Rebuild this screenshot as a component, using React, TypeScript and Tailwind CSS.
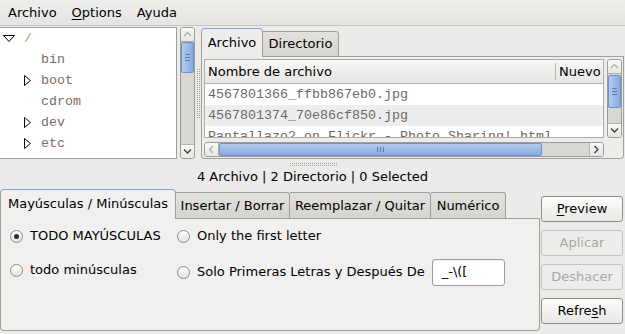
import React from "react";

type Dir = "up" | "down" | "left" | "right";

function Chevron({ dir, color }: { dir: Dir; color: string }) {
  const vertical = dir === "up" || dir === "down";
  const pts = {
    up: "1,5 4.5,1.5 8,5",
    down: "1,1.5 4.5,5 8,1.5",
    left: "5,1 1.5,4.5 5,8",
    right: "1.5,1 5,4.5 1.5,8",
  }[dir];
  return (
    <svg width={vertical ? 9 : 7} height={vertical ? 7 : 9} viewBox={vertical ? "0 0 9 7" : "0 0 7 9"}>
      <polyline points={pts} fill="none" stroke={color} strokeWidth="1.3" />
    </svg>
  );
}

function VScroll({ thumbTop, thumbH, upColor, downColor }: { thumbTop: number; thumbH: number; upColor: string; downColor: string }) {
  return (
    <div className="w-[15px] h-full flex flex-col rounded-[3px] border border-[#9e9c98] bg-[#d9d7d3] overflow-hidden">
      <div className="h-[14px] shrink-0 flex items-center justify-center bg-gradient-to-b from-[#f8f8f7] to-[#e7e6e3] border-b border-[#b3b1ad]">
        <Chevron dir="up" color={upColor} />
      </div>
      <div
        className="shrink-0 flex flex-col items-center justify-center gap-[2px] bg-gradient-to-r from-[#b2ccf0] to-[#88aade] border border-[#6d91c9] rounded-[2px]"
        style={{ marginTop: thumbTop, height: thumbH }}
      >
        <span className="block w-[5px] h-px bg-[#5b7db8]" />
        <span className="block w-[5px] h-px bg-[#5b7db8]" />
        <span className="block w-[5px] h-px bg-[#5b7db8]" />
      </div>
      <div className="flex-1" />
      <div className="h-[14px] shrink-0 flex items-center justify-center bg-gradient-to-b from-[#f8f8f7] to-[#e7e6e3] border-t border-[#b3b1ad]">
        <Chevron dir="down" color={downColor} />
      </div>
    </div>
  );
}

function HScroll() {
  return (
    <div className="h-[15px] w-full flex rounded-[3px] border border-[#9e9c98] bg-[#d9d7d3] overflow-hidden">
      <div className="w-[14px] shrink-0 flex items-center justify-center bg-gradient-to-b from-[#f8f8f7] to-[#e7e6e3] border-r border-[#b3b1ad]">
        <Chevron dir="left" color="#b0b0ae" />
      </div>
      <div className="w-[323px] shrink-0 flex items-center justify-center gap-[2px] bg-gradient-to-b from-[#b2ccf0] to-[#88aade] border border-[#6d91c9] rounded-[2px]">
        <span className="block w-px h-[5px] bg-[#5b7db8]" />
        <span className="block w-px h-[5px] bg-[#5b7db8]" />
        <span className="block w-px h-[5px] bg-[#5b7db8]" />
      </div>
      <div className="flex-1" />
      <div className="w-[14px] shrink-0 flex items-center justify-center bg-gradient-to-b from-[#f8f8f7] to-[#e7e6e3] border-l border-[#b3b1ad]">
        <Chevron dir="right" color="#3c3c3c" />
      </div>
    </div>
  );
}

function Dots({ w, h }: { w: number; h: number }) {
  const rects: React.ReactNode[] = [];
  for (let x = 0; x < w; x += 2) {
    for (let y = 0; y < h; y += 2) {
      rects.push(<rect key={`${x}-${y}`} x={x} y={y} width="1" height="1" fill="#a4a29d" />);
    }
  }
  return (
    <svg width={w} height={h} viewBox={`0 0 ${w} ${h}`}>
      {rects}
    </svg>
  );
}

function Radio({ checked }: { checked?: boolean }) {
  return (
    <span className="w-[13px] h-[13px] shrink-0 rounded-full border border-[#8c8a86] bg-gradient-to-b from-[#ffffff] to-[#e2e1de] flex items-center justify-center">
      {checked && <span className="block w-[5px] h-[5px] rounded-full bg-[#2c2c2c]" />}
    </span>
  );
}

const tree = [
  { label: "/", level: 0, exp: "open", color: "text-[#c8956b]" },
  { label: "bin", level: 1, exp: "", color: "text-[#7e6c60]" },
  { label: "boot", level: 1, exp: "closed", color: "text-[#7e6c60]" },
  { label: "cdrom", level: 1, exp: "", color: "text-[#7e6c60]" },
  { label: "dev", level: 1, exp: "closed", color: "text-[#7e6c60]" },
  { label: "etc", level: 1, exp: "closed", color: "text-[#7e6c60]" },
];

const files = [
  "4567801366_ffbb867eb0.jpg",
  "4567801374_70e86cf850.jpg",
  "Pantallazo2 on Flickr - Photo Sharing!.html",
];

export default function App() {
  return (
    <div className="w-[625px] h-[334px] overflow-hidden bg-[#edebe9] font-['DejaVu_Sans',sans-serif] text-[13px] text-black flex flex-col">
      {/* Menu bar */}
      <div className="h-[26px] shrink-0 flex items-center pl-[8px] gap-[15px] border-b border-[#c6c4c0] bg-gradient-to-b from-[#f0efed] to-[#e5e4e1] leading-none pb-[1px]">
        <span>Archivo</span>
        <span>
          <span className="underline underline-offset-[2px]">O</span>ptions
        </span>
        <span>Ayuda</span>
      </div>

      {/* Top pane */}
      <div className="h-[132px] mt-[1px] shrink-0 flex">
        {/* Tree */}
        <div className="w-[177px] shrink-0 bg-white border-t border-r border-b border-[#9f9d99] overflow-hidden font-['Liberation_Mono',monospace] text-[13.33px]">
          {tree.map((t, i) => (
            <div key={i} className={`h-[21px] flex items-center ${t.level === 0 ? "pl-[3px]" : "pl-[24px]"}`}>
              <span className={`${t.level === 0 ? "w-[21px]" : "w-[17px]"} shrink-0 flex items-center`}>
                {t.exp === "open" && (
                  <svg width="12" height="7" viewBox="0 0 12 7">
                    <polygon points="0.5,0.5 11.5,0.5 6,6.5" fill="none" stroke="#000" strokeWidth="1" />
                  </svg>
                )}
                {t.exp === "closed" && (
                  <svg width="7" height="11" viewBox="0 0 7 11">
                    <polygon points="0.5,0.5 6.5,5.5 0.5,10.5" fill="none" stroke="#000" strokeWidth="1" />
                  </svg>
                )}
              </span>
              <span className={t.color}>{t.label}</span>
            </div>
          ))}
        </div>
        <div className="ml-[3px] shrink-0">
          <VScroll thumbTop={0} thumbH={31} upColor="#b0b0ae" downColor="#3c3c3c" />
        </div>
        {/* vertical pane handle */}
        <div className="w-[6px] shrink-0 flex items-center justify-center">
          <Dots w={3} h={49} />
        </div>

        {/* Notebook */}
        <div className="flex-1 mr-[1px] flex flex-col">
          <div className="h-[30px] shrink-0 flex items-end">
            <div className="w-[62px] h-[29px] shrink-0 flex items-center justify-center bg-[#efedeb] border-l border-r border-t border-[#a09e99] border-t-[#86a2cf] rounded-t-[4px] pb-[1px]">
              Archivo
            </div>
            <div className="w-[76px] h-[26px] shrink-0 flex items-center justify-center bg-gradient-to-b from-[#e3e1de] to-[#d6d4cf] border-t border-r border-b border-[#a09e99] rounded-tr-[3px]">
              Directorio
            </div>
            <div className="flex-1 h-px bg-[#a09e99]" />
          </div>
          <div className="flex-1 bg-[#efedeb] border-l border-r border-b border-[#a09e99] rounded-b-[4px] pt-[2px] pl-[2px] pr-[1px] pb-[1px] grid grid-cols-[400px_15px] grid-rows-[79px_15px] gap-x-[3px] gap-y-[4px]">
            <div className="border border-[#aeaca8] bg-white overflow-hidden flex flex-col">
              <div className="h-[24px] shrink-0 flex items-center bg-gradient-to-b from-[#f7f7f6] to-[#e6e5e2] border-b border-[#b6b4b0]">
                <span className="w-[350px] shrink-0 pl-[3px]">Nombre de archivo</span>
                <span className="w-px h-[17px] bg-[#b8b6b2] shrink-0" />
                <span className="pl-[3px] whitespace-nowrap">Nuevo</span>
              </div>
              <div className="font-['Liberation_Mono',monospace] text-[13.33px] text-[#6c6a68]">
                {files.map((f, i) => (
                  <div key={i} className={`h-[21px] flex items-center pl-[3px] whitespace-nowrap ${i % 2 === 1 ? "bg-[#ededec]" : "bg-white"}`}>
                    {f}
                  </div>
                ))}
              </div>
            </div>
            <VScroll thumbTop={1} thumbH={33} upColor="#b0b0ae" downColor="#3c3c3c" />
            <HScroll />
            <div />
          </div>
        </div>
      </div>

      {/* horizontal pane handle */}
      <div className="h-[9px] shrink-0 flex justify-center pt-[4px] pl-[1px]">
        <Dots w={47} h={3} />
      </div>

      {/* Status */}
      <div className="h-[16px] shrink-0 flex items-center justify-center leading-none">
        4 Archivo | 2 Directorio | 0 Selected
      </div>

      {/* Bottom area */}
      <div className="h-[142px] mt-[5px] shrink-0 flex">
        <div className="w-[540px] shrink-0 flex flex-col">
          <div className="h-[30px] shrink-0 flex items-end">
            <div className="w-[176px] h-[30px] shrink-0 flex items-center justify-center bg-[#f1f0ee] border-l border-r border-t border-[#a09e99] border-t-[#86a2cf] rounded-t-[4px] pb-[1px]">
              Mayúsculas / Minúsculas
            </div>
            <div className="w-[114px] h-[27px] shrink-0 flex items-center justify-center bg-gradient-to-b from-[#e3e1de] to-[#d6d4cf] border-t border-r border-b border-[#a09e99] rounded-tr-[3px]">
              Insertar / Borrar
            </div>
            <div className="w-[141px] h-[27px] shrink-0 flex items-center justify-center bg-gradient-to-b from-[#e3e1de] to-[#d6d4cf] border-t border-r border-b border-[#a09e99] rounded-tr-[3px]">
              Reemplazar / Quitar
            </div>
            <div className="w-[75px] h-[27px] shrink-0 flex items-center justify-center bg-gradient-to-b from-[#e3e1de] to-[#d6d4cf] border-t border-r border-b border-[#a09e99] rounded-tr-[3px]">
              Numérico
            </div>
            <div className="flex-1 h-px bg-[#a09e99]" />
          </div>
          <div className="h-[112px] shrink-0 bg-[#f1f0ee] border-l border-r border-b border-[#a09e99] rounded-b-[4px] pt-[5px] pl-[9px]">
            <div className="grid grid-cols-[167px_auto] grid-rows-[24px_28px] gap-y-[10px]">
              <div className="flex items-center gap-[7px]">
                <Radio checked />
                <span>TODO MAYÚSCULAS</span>
              </div>
              <div className="flex items-center gap-[7px]">
                <Radio />
                <span>Only the first letter</span>
              </div>
              <div className="h-[24px] flex items-center gap-[7px]">
                <Radio />
                <span>todo minúsculas</span>
              </div>
              <div className="flex items-center">
                <Radio />
                <span className="ml-[7px]">Solo Primeras Letras y Después De</span>
                <div className="ml-[7px] w-[73px] h-[27px] bg-white border border-[#9c9a96] rounded-[3px] flex items-center pl-[9px] shadow-[inset_0_1px_1px_rgba(0,0,0,0.08)]">
                  {"_-\\(["}
                </div>
              </div>
            </div>
          </div>
        </div>

        {/* Buttons */}
        <div className="w-[82px] ml-[1px] pt-[7px] flex flex-col gap-[8px]">
          <div className="h-[26px] flex items-center justify-center rounded-[3px] border border-[#8d8b87] bg-gradient-to-b from-[#fdfdfc] to-[#e8e7e4]">
            <span>
              <span className="underline underline-offset-[2px]">P</span>review
            </span>
          </div>
          <div className="h-[26px] flex items-center justify-center rounded-[3px] border border-[#c3c1bd] bg-[#eeedeb] text-[#a8a7a3]">
            Aplicar
          </div>
          <div className="h-[26px] flex items-center justify-center rounded-[3px] border border-[#c3c1bd] bg-[#eeedeb] text-[#a8a7a3]">
            Deshacer
          </div>
          <div className="h-[26px] flex items-center justify-center rounded-[3px] border border-[#8d8b87] bg-gradient-to-b from-[#fdfdfc] to-[#e8e7e4]">
            <span>
              Refre<span className="underline underline-offset-[2px]">s</span>h
            </span>
          </div>
        </div>
      </div>
    </div>
  );
}
